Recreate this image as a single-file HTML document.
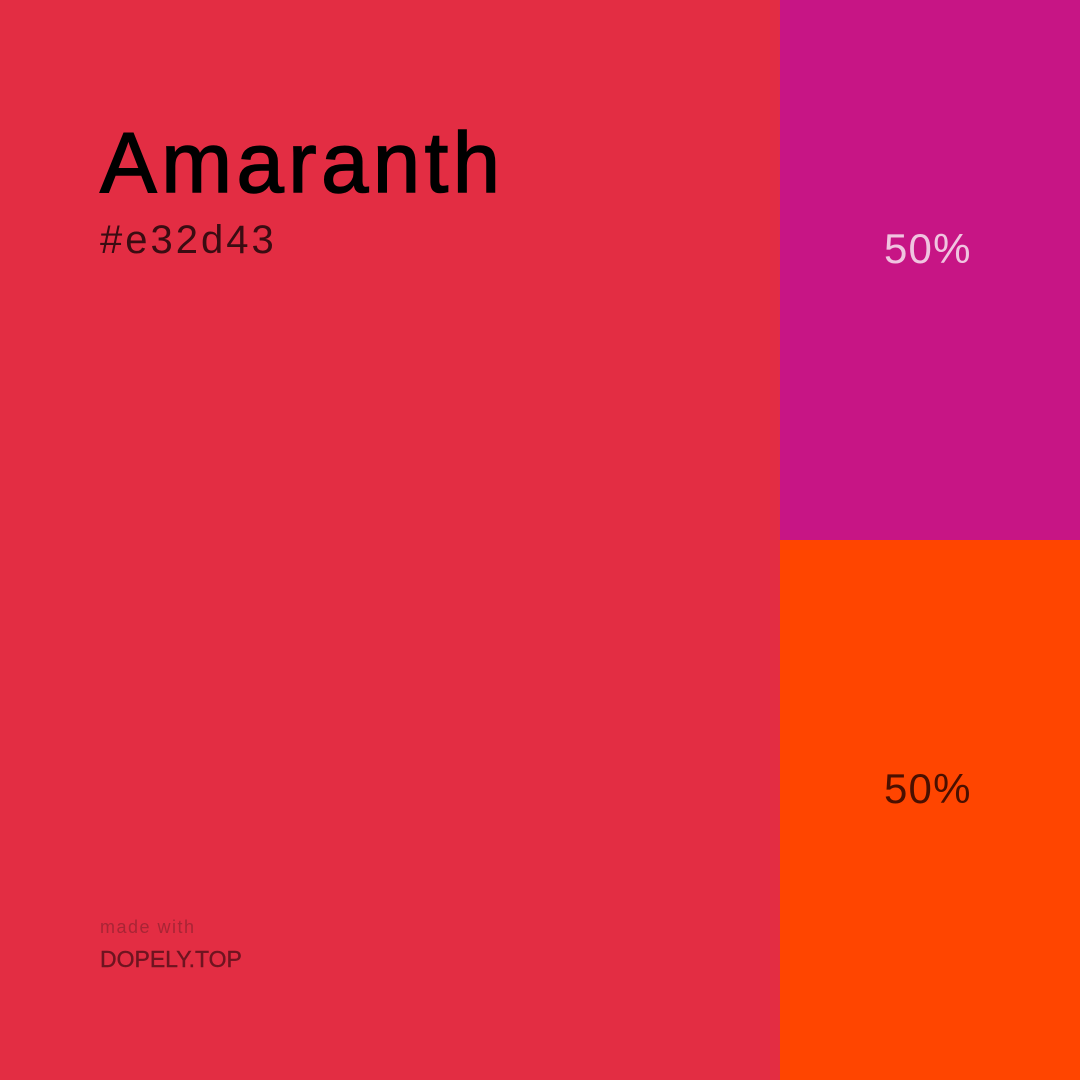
<!DOCTYPE html>
<html><head><style>
body{margin:0;width:1080px;height:1080px;position:relative;overflow:hidden;font-family:"Liberation Sans",sans-serif}
.a{position:absolute;left:0;top:0;width:780px;height:1080px;background:#e32d43}
.b{position:absolute;left:780px;top:0;width:300px;height:540px;background:#c71585}
.c{position:absolute;left:780px;top:540px;width:300px;height:540px;background:#ff4500}
.t{position:absolute;white-space:nowrap}
</style></head><body>
<div class="a"></div><div class="b"></div><div class="c"></div>
<div class="t" style="left:100px;top:115px;font-size:85px;color:#000;letter-spacing:4.5px;-webkit-text-stroke:1.5px #000">Amaranth</div>
<div class="t" style="left:100px;top:218px;font-size:40px;color:#3a0c12;letter-spacing:3px">#e32d43</div>
<div class="t" style="left:884px;top:225px;font-size:42px;color:#f0c4e0;letter-spacing:1.2px">50%</div>
<div class="t" style="left:884px;top:765px;font-size:42px;color:#4a1000;letter-spacing:1.2px">50%</div>
<div class="t" style="left:100px;top:917px;font-size:18px;color:#a82535;letter-spacing:1.5px">made with</div>
<div class="t" style="left:100px;top:946px;font-size:23px;color:#6e1420;-webkit-text-stroke:0.4px #6e1420">DOPELY.TOP</div>
</body></html>
